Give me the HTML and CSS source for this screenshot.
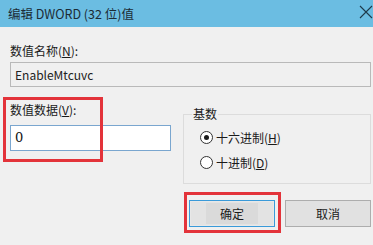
FILE: index.html
```html
<!DOCTYPE html>
<html>
<head>
  <title>编辑 DWORD (32 位)值</title>
  <link rel="stylesheet" href="styles.css">
</head>
<body>

<div class="dialog">
  <div class="titlebar">
    <span class="title">编辑 DWORD (32 位)值</span>
    <svg class="close" width="14" height="14" viewBox="0 0 14 14">
      <path d="M1 1 L13 13 M13 1 L1 13" stroke="#1e3a4a" stroke-width="1.1" fill="none"/>
    </svg>
  </div>

  <div class="content">
    <div class="label label-name">数值名称(<u>N</u>):</div>
    <div class="input input-name">EnableMtcuvc</div>

    <div class="row">
      <div class="data-col">
        <div class="label label-data">数值数据(<u>V</u>):</div>
        <div class="input input-data">0</div>
        <div class="mark mark-data"></div>
      </div>

      <fieldset class="base">
        <legend>基数</legend>
        <div class="radio-row">
          <span class="radio checked"></span>
          <span>十六进制(<u>H</u>)</span>
        </div>
        <div class="radio-row">
          <span class="radio"></span>
          <span>十进制(<u>D</u>)</span>
        </div>
      </fieldset>
    </div>

    <div class="buttons">
      <div class="btn-wrap">
        <button class="btn btn-default"><span class="focus">确定</span></button>
        <div class="mark mark-ok"></div>
      </div>
      <button class="btn">取消</button>
    </div>
  </div>
</div>

</body>
</html>
```

FILE: styles.css
```css
body {
  margin: 0;
  padding: 0;
  background-color: #f0f0f0;
  font-family: "Microsoft YaHei", "Noto Sans CJK SC", sans-serif;
  font-size: 12px;
  color: #1a1a1a;
}

.dialog {
  width: 373px;
  height: 245px;
  background-color: #f0f0f0;
}

.titlebar {
  height: 27px;
  background-color: #6bbde2;
  display: flex;
  justify-content: space-between;
  align-items: center;
  padding-left: 8px;
  box-sizing: border-box;
}

.title {
  font-size: 12.5px;
  color: #1c2c36;
  margin-top: -1px;
}

.close {
  margin-right: 0;
  margin-top: -4px;
}

.content {
  padding: 0 2px 0 10px;
}

.label {
  height: 14px;
  line-height: 14px;
}

.label-name {
  margin-top: 17px;
}

.input {
  box-sizing: border-box;
  border: 1px solid #b9b9b9;
  padding-left: 4px;
  font-size: 12px;
}

.input-name {
  margin-top: 4px;
  height: 25px;
  line-height: 23px;
  background-color: #f0f0f0;
  color: #222;
}

.row {
  display: flex;
  margin-top: 0;
}

.data-col {
  position: relative;
  width: 161px;
}

.label-data {
  margin-top: 16px;
}

.input-data {
  margin-top: 8px;
  height: 26px;
  line-height: 24px;
  background-color: #fff;
  border-color: #7aa6cf;
  font-family: "DejaVu Serif", serif;
  font-size: 13px;
  color: #111;
}

.mark {
  position: absolute;
  border: 3px solid #e3333a;
  box-sizing: border-box;
}

.mark-data {
  left: -7px;
  top: 10px;
  width: 100px;
  height: 65px;
}

.base {
  margin: 21px 0 0 12px;
  padding: 0 0 0 16px;
  width: 188px;
  height: 76px;
  box-sizing: border-box;
  border: 1px solid #dcdcdc;
}

.base legend {
  padding: 0 1px;
  margin-left: -8px;
  line-height: 12px;
}

.radio-row {
  display: flex;
  align-items: center;
  height: 14px;
  margin-top: 10px;
}

.radio-row + .radio-row {
  margin-top: 11px;
}

.radio {
  width: 11px;
  height: 11px;
  border: 1px solid #333;
  border-radius: 50%;
  background-color: #fff;
  margin-right: 3px;
  position: relative;
}

.radio.checked::after {
  content: "";
  position: absolute;
  left: 3px;
  top: 3px;
  width: 5px;
  height: 5px;
  border-radius: 50%;
  background-color: #1a1a1a;
}

.buttons {
  display: flex;
  justify-content: flex-end;
  gap: 10px;
  margin-top: 16px;
}

.btn-wrap {
  position: relative;
}

.btn {
  width: 86px;
  height: 27px;
  border: 1px solid #adadad;
  background-color: #e1e1e1;
  font-family: "Microsoft YaHei", "Noto Sans CJK SC", sans-serif;
  font-size: 12px;
  color: #1a1a1a;
  padding: 0;
}

.btn-default {
  border: 1px solid #3a9ad9;
  background-color: #e3e3e3;
  box-shadow: inset 0 0 0 1px #e8e8e8;
}

.focus {
  display: inline-block;
  padding: 2px 14px;
  background-color: #dadada;
}

.mark-ok {
  left: -5px;
  top: -8px;
  width: 97px;
  height: 41px;
}
```
